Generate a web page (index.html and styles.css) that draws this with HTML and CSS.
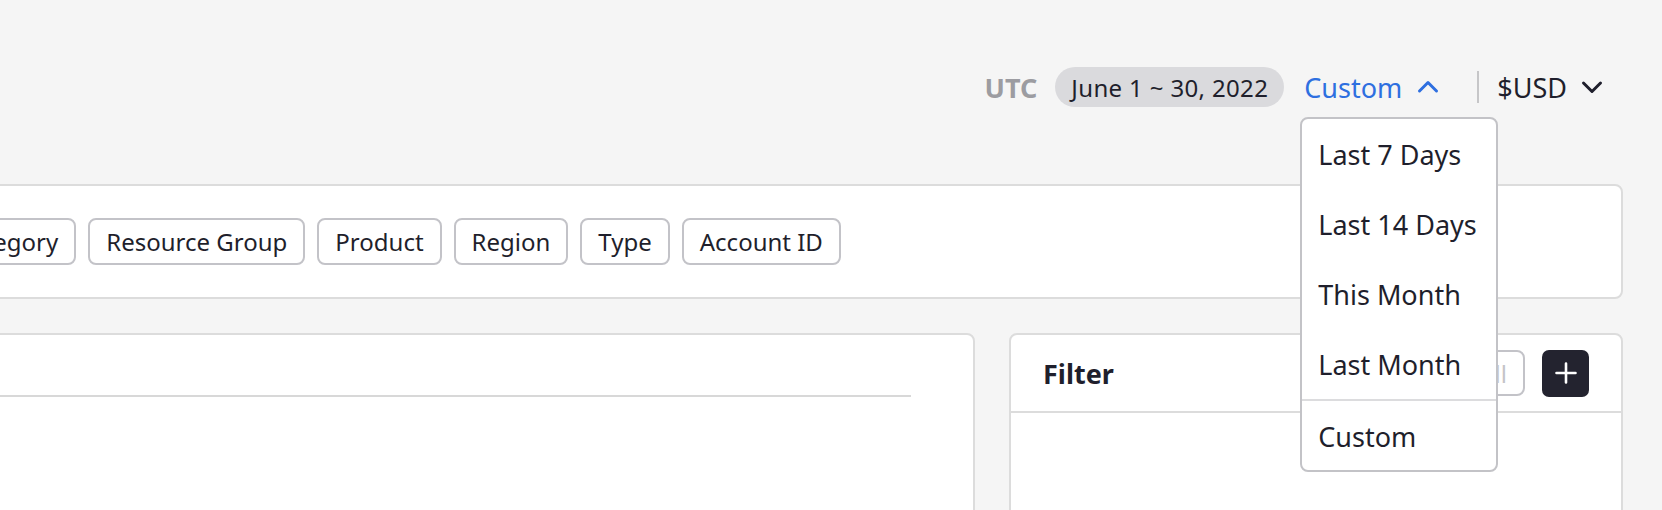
FILE: index.html
```html
<!DOCTYPE html>
<html lang="en">
<head>
<meta charset="utf-8">
<title>Cost Explorer</title>
<link rel="stylesheet" href="styles.css">
</head>
<body>
<header class="topbar">
  <span class="tz">UTC</span>
  <span class="range-pill">June 1 ~ 30, 2022</span>
  <div class="period">
    <button class="period-trigger" type="button">
      <span>Custom</span>
      <svg class="chev" width="24" height="14" viewBox="0 0 24 14"><polyline points="3.5,11 12,2.5 20.5,11" fill="none" stroke="currentColor" stroke-width="3" stroke-linecap="round" stroke-linejoin="round"/></svg>
    </button>
    <ul class="menu">
      <li class="menu-item">Last 7 Days</li>
      <li class="menu-item">Last 14 Days</li>
      <li class="menu-item">This Month</li>
      <li class="menu-item">Last Month</li>
      <li class="menu-item menu-item-sep">Custom</li>
    </ul>
  </div>
  <span class="vdivider"></span>
  <button class="currency" type="button">
    <span>$USD</span>
    <svg class="chev" width="24" height="14" viewBox="0 0 24 14"><polyline points="3.5,3 12,11.5 20.5,3" fill="none" stroke="currentColor" stroke-width="3" stroke-linecap="round" stroke-linejoin="round"/></svg>
  </button>
</header>

<main class="content">
  <section class="card groupby">
    <span class="chip">Category</span>
    <span class="chip">Resource Group</span>
    <span class="chip">Product</span>
    <span class="chip">Region</span>
    <span class="chip">Type</span>
    <span class="chip">Account ID</span>
  </section>

  <div class="bottom-row">
    <section class="card chart-card">
      <div class="chart-line"></div>
    </section>
    <section class="card filter-card">
      <div class="filter-head">
        <span class="filter-title">Filter</span>
        <div class="filter-actions">
          <div class="filter-input"><span class="placeholder">All</span></div>
          <button class="add-btn" type="button" aria-label="Add filter">
            <svg width="22" height="22" viewBox="0 0 22 22"><path d="M11 1.5v19M1.5 11h19" stroke="#fff" stroke-width="2.6" stroke-linecap="round"/></svg>
          </button>
        </div>
      </div>
    </section>
  </div>
</main>
</body>
</html>
```

FILE: styles.css
```css
* { box-sizing: border-box; }

html, body {
  margin: 0;
  padding: 0;
  background: #f5f5f5;
  overflow: hidden;
}

body {
  font-family: "Noto Sans", "Open Sans", sans-serif;
  color: #1f1f2c;
  width: 1662px;
  height: 510px;
}

button {
  font: inherit;
  color: inherit;
  background: none;
  border: 0;
  padding: 0;
  margin: 0;
  cursor: pointer;
}

/* ---------- top bar ---------- */
.topbar {
  display: flex;
  justify-content: flex-end;
  align-items: center;
  height: 40px;
  margin-top: 67px;
  padding-right: 58px;
}

.tz {
  font-size: 27px;
  font-weight: 700;
  color: #9c9ca1;
  margin-right: 18px;
}

.range-pill {
  height: 40px;
  display: flex;
  align-items: center;
  padding: 0 16px;
  border-radius: 20px;
  background: #dadadd;
  font-size: 24px;
  letter-spacing: 0.35px;
  color: #1f1f2c;
  margin-right: 20px;
}

.period {
  position: relative;
}

.period-trigger {
  display: flex;
  align-items: center;
  font-size: 27px;
  color: #2e6fe0;
}

.chev {
  display: block;
  margin-left: 14px;
}

.vdivider {
  width: 2px;
  height: 32px;
  background: #c6c6c8;
  margin: 0 18px 0 37px;
}

.currency {
  display: flex;
  align-items: center;
  font-size: 27px;
  color: #1f1f2c;
}

.currency .chev {
  margin-left: 13px;
}

/* ---------- dropdown ---------- */
.menu {
  position: absolute;
  top: calc(100% + 11px);
  left: -4px;
  width: 198px;
  margin: 0;
  padding: 0;
  list-style: none;
  background: #fff;
  border: 2px solid #c3c3c7;
  border-radius: 8px;
  z-index: 10;
}

.menu-item {
  height: 70px;
  line-height: 66px;
  padding-top: 3px;
  padding-left: 16px;
  font-size: 27px;
  color: #1f1f2c;
  white-space: nowrap;
}

.menu-item-sep {
  border-top: 2px solid #dcdcde;
  height: 71px;
  line-height: 66px;
  padding-top: 3px;
}

/* ---------- content ---------- */
.content {
  margin-left: -100px;
  margin-right: 39px;
  margin-top: 77px;
}

.card {
  background: #fff;
  border: 2px solid #dcdcdc;
  border-radius: 8px;
}

.groupby {
  display: flex;
  gap: 12px;
  padding: 32px 32px 32px 36px;
}

.chip {
  height: 47px;
  display: flex;
  align-items: center;
  padding: 0 16px;
  border: 2px solid #c3c3c8;
  border-radius: 8px;
  font-size: 24px;
  color: #1f1f2c;
  white-space: nowrap;
}

.bottom-row {
  display: grid;
  grid-template-columns: 1fr 614px;
  gap: 34px;
  margin-top: 34px;
}

.chart-card {
  height: 220px;
  padding: 60px 62px 0 32px;
}

.chart-line {
  border-top: 2px solid #d8d8d8;
}

.filter-card {
  height: 220px;
}

.filter-head {
  height: 78px;
  display: flex;
  align-items: center;
  justify-content: space-between;
  padding: 0 32px;
  border-bottom: 2px solid #dcdcdc;
}

.filter-title {
  font-size: 27px;
  font-weight: 700;
  color: #1f1f2c;
}

.filter-actions {
  display: flex;
  align-items: center;
  gap: 17px;
}

.filter-input {
  width: 200px;
  height: 46px;
  border: 2px solid #c3c3c8;
  border-radius: 8px;
  display: flex;
  align-items: center;
  justify-content: flex-end;
  padding-right: 16px;
}

.placeholder {
  font-size: 24px;
  color: #c4c4c8;
}

.add-btn {
  width: 47px;
  height: 47px;
  border-radius: 7px;
  background: #23232f;
  display: flex;
  align-items: center;
  justify-content: center;
}
```
